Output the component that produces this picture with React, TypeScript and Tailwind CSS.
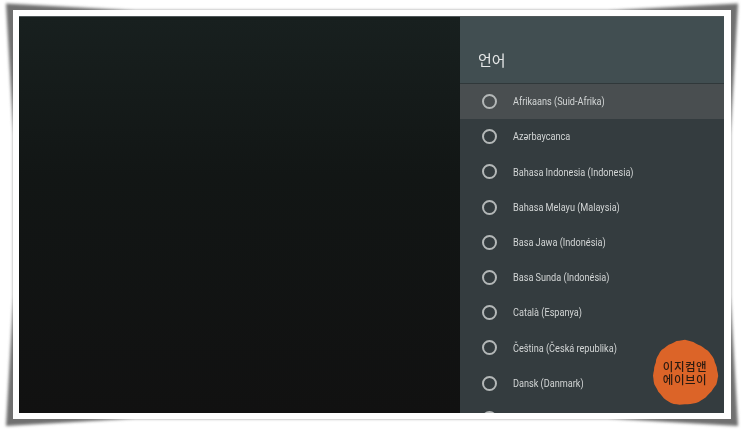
const LANGUAGES = [
  'Afrikaans (Suid-Afrika)',
  'Azərbaycanca',
  'Bahasa Indonesia (Indonesia)',
  'Bahasa Melayu (Malaysia)',
  'Basa Jawa (Indonésia)',
  'Basa Sunda (Indonésia)',
  'Català (Espanya)',
  'Čeština (Česká republika)',
  'Dansk (Danmark)',
  '',
]

// Rough stamp outline of the watermark, r wobbles a little around 32
const BLOB_POINTS = Array.from({ length: 72 }, (_, i) => {
  const a = (i / 72) * Math.PI * 2
  const r = 32.2 + Math.sin(a * 3 + 1) * 0.7 + Math.sin(a * 7) * 0.4 + Math.sin(a * 23) * 0.2
  return `${(33 + Math.cos(a) * r).toFixed(1)},${(34 + Math.sin(a) * r).toFixed(1)}`
}).join(' ')

function LanguageRow({ label, focused }: { label: string; focused: boolean }) {
  return (
    <div className={`flex h-[35.2px] shrink-0 items-center pl-[22px] ${focused ? 'bg-[#494e50]' : ''}`}>
      <span className="h-[15px] w-[15px] shrink-0 rounded-full border-2 border-[#b4b8b8]" />
      <span className="ml-[16px] origin-left scale-x-[0.87] whitespace-nowrap pt-px text-[10.5px] text-[#d2d5d5] [font-family:Roboto,sans-serif]">
        {label}
      </span>
    </div>
  )
}

export default function App() {
  return (
    <div className="relative h-[430px] w-[743px] overflow-hidden bg-white pl-[13px] pt-[10px]">
      {/* lifted-corner shadow, tapers off along each edge */}
      <svg className="absolute left-0 top-0" width="743" height="430">
        <filter id="soft">
          <feGaussianBlur stdDeviation="1.8" />
        </filter>
        <polygon
          filter="url(#soft)"
          fill="#707070"
          points="6,3.5 135,10.5 608,10.5 738,3.5 730.5,135 730.5,295 738,426 608,418.5 135,418.5 6,426 13.5,295 13.5,135"
        />
      </svg>
      <div className="relative h-[409px] w-[718px] bg-white p-[6px]">
        <div className="relative flex h-[397px] w-[705px] overflow-hidden border-t border-[#50585a] blur-[0.35px]">
          <div className="h-full w-[441px] bg-gradient-to-b from-[#18201f] via-[#121615] via-40% to-[#111111]" />
          <div className="flex h-full w-[264px] flex-col overflow-hidden bg-[#343c3f]">
            <div className="flex h-[67px] shrink-0 items-center border-b border-[#30383a] bg-[#414e51] pl-[18px] pt-[21px]">
              <span className="text-[15px] text-[#e6e8e8] [font-family:'Noto_Sans_CJK_KR',sans-serif]">언어</span>
            </div>
            {LANGUAGES.map((label, i) => (
              <LanguageRow key={i} label={label} focused={i === 0} />
            ))}
          </div>
          <div className="absolute left-[633px] top-[322px] flex h-[68px] w-[66px] flex-col items-center justify-center pt-px text-[11.5px] leading-[13px] font-medium tracking-[0.5px] text-[#2a1a10] [font-family:'Liberation_Sans','Noto_Sans_CJK_KR',sans-serif]">
            <svg className="absolute inset-0 overflow-visible" width="66" height="68">
              <polygon points={BLOB_POINTS} fill="#dc6428" />
            </svg>
            <span className="relative">이지컴앤</span>
            <span className="relative">에이브이</span>
          </div>
        </div>
      </div>
    </div>
  )
}
